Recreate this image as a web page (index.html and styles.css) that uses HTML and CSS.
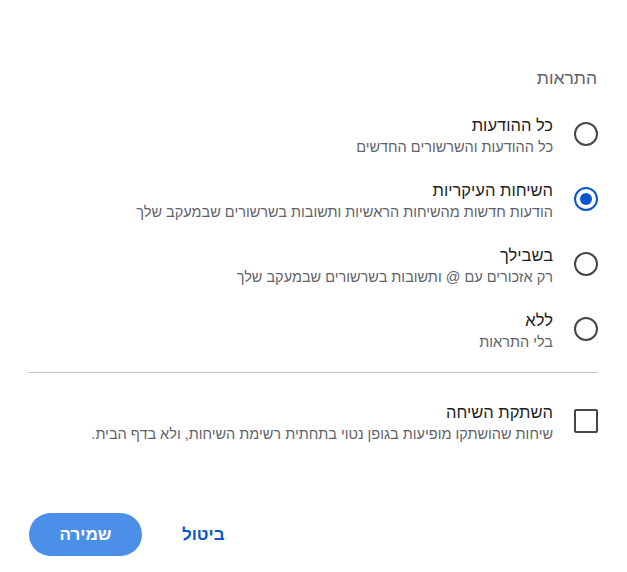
FILE: index.html
```html
<!DOCTYPE html>
<html lang="he" dir="rtl">
<head>
<meta charset="utf-8">
<title>התראות</title>
<link rel="stylesheet" href="styles.css">
</head>
<body>
<div class="dialog">
  <div class="heading">התראות</div>
  <div class="options">
    <div class="row">
      <span class="radio"></span>
      <div class="text">
        <div class="title">כל ההודעות</div>
        <div class="sub">כל ההודעות והשרשורים החדשים</div>
      </div>
    </div>
    <div class="row">
      <span class="radio checked"></span>
      <div class="text">
        <div class="title">השיחות העיקריות</div>
        <div class="sub">הודעות חדשות מהשיחות הראשיות ותשובות בשרשורים שבמעקב שלך</div>
      </div>
    </div>
    <div class="row">
      <span class="radio"></span>
      <div class="text">
        <div class="title">בשבילך</div>
        <div class="sub">רק אזכורים עם @ ותשובות בשרשורים שבמעקב שלך</div>
      </div>
    </div>
    <div class="row">
      <span class="radio"></span>
      <div class="text">
        <div class="title">ללא</div>
        <div class="sub">בלי התראות</div>
      </div>
    </div>
  </div>
  <div class="divider"></div>
  <div class="row mute">
    <span class="checkbox"></span>
    <div class="text">
      <div class="title">השתקת השיחה</div>
      <div class="sub">שיחות שהושתקו מופיעות בגופן נטוי בתחתית רשימת השיחות, ולא בדף הבית.</div>
    </div>
  </div>
  <div class="actions">
    <button class="btn cancel">ביטול</button>
    <button class="btn save">שמירה</button>
  </div>
</div>
</body>
</html>
```

FILE: styles.css
```css
html, body {
  margin: 0;
  padding: 0;
  background: #ffffff;
}
body {
  font-family: "Liberation Sans", Arial, "DejaVu Sans", sans-serif;
  color: #1f1f1f;
}
.dialog {
  padding: 66px 29px 0 28px;
}
.heading {
  font-size: 17.5px;
  line-height: 24px;
  color: #5f6368;
  padding-right: 1px;
}
.options {
  display: flex;
  flex-direction: column;
  gap: 21px;
  margin-top: 24px;
}
.row {
  display: flex;
  align-items: center;
  gap: 21px;
  height: 44px;
}
.radio {
  flex: none;
  box-sizing: border-box;
  width: 24px;
  height: 24px;
  border: 2px solid #444746;
  border-radius: 50%;
  margin-top: -4px;
  display: flex;
  align-items: center;
  justify-content: center;
}
.radio.checked {
  border-color: #0b57d0;
}
.radio.checked::after {
  content: "";
  width: 12px;
  height: 12px;
  border-radius: 50%;
  background: #0b57d0;
}
.checkbox {
  flex: none;
  box-sizing: border-box;
  width: 24px;
  height: 24px;
  border: 2px solid #444746;
  border-radius: 2px;
  margin-top: -4px;
}
.text {
  display: flex;
  flex-direction: column;
}
.title {
  font-size: 16.5px;
  line-height: 22px;
  color: #1f1f1f;
}
.sub {
  font-size: 14.5px;
  line-height: 22px;
  color: #5f6368;
}
.divider {
  height: 1px;
  background: #c7c7c7;
  margin-top: 19px;
}
.mute {
  margin-top: 28px;
}
.actions {
  display: flex;
  justify-content: flex-end;
  align-items: center;
  gap: 24px;
  margin-top: 68px;
  padding-left: 1px;
}
.btn {
  font-family: inherit;
  font-size: 17px;
  font-weight: bold;
  height: 43px;
  border: none;
  border-radius: 22px;
  cursor: pointer;
}
.cancel {
  background: transparent;
  color: #0b57d0;
  padding: 0 16px;
}
.save {
  background: #4c8fe8;
  color: #ffffff;
  width: 113px;
}
```
